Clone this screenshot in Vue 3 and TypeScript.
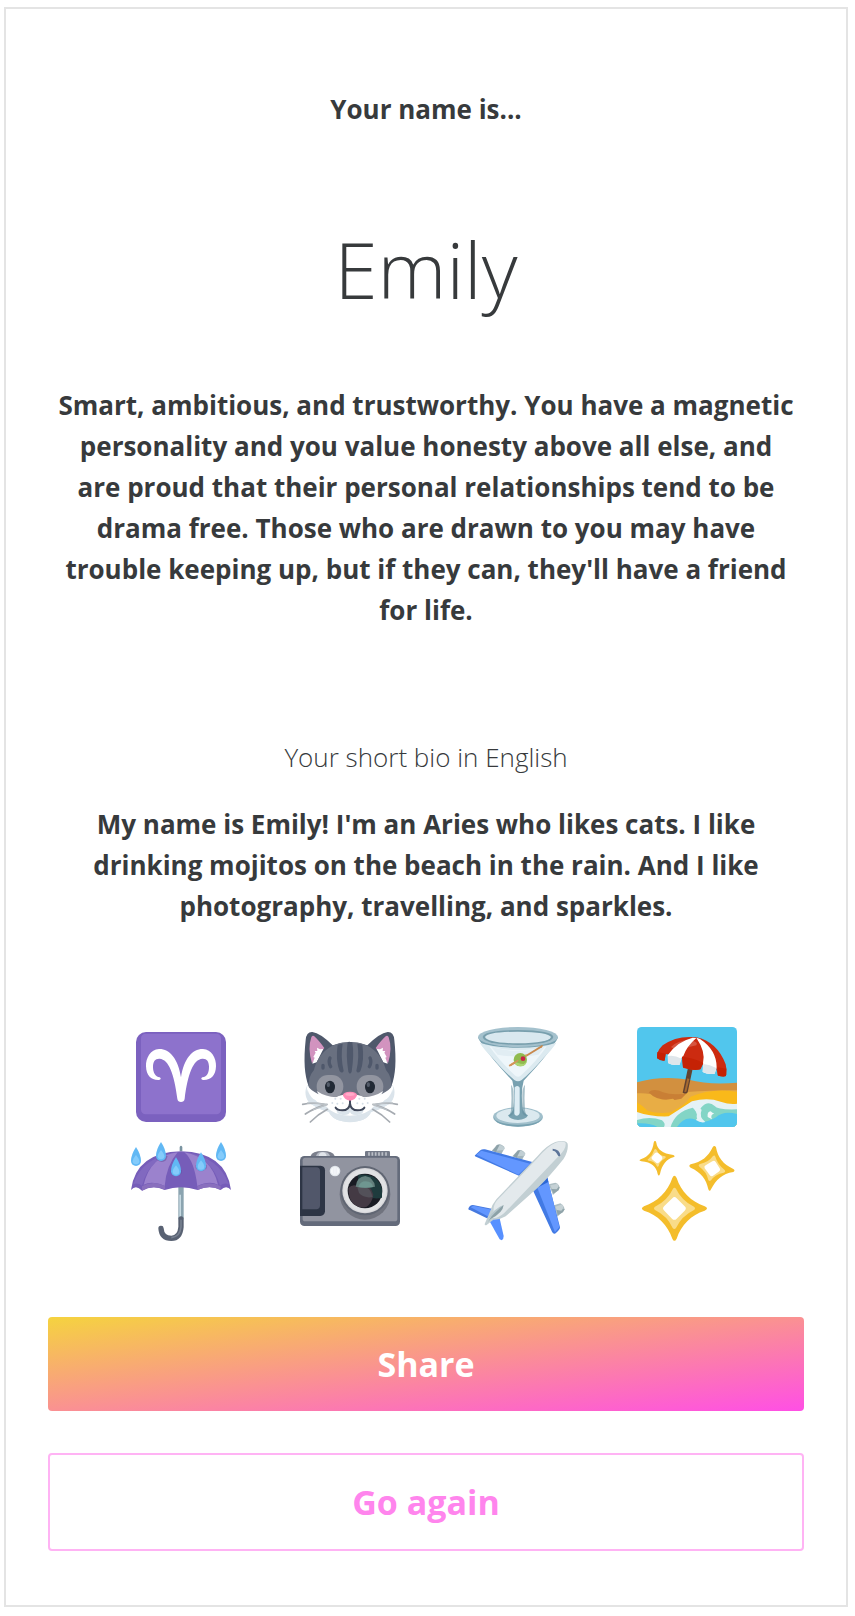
<script setup lang="ts">
import { ref } from 'vue'

const name = ref('Emily')
</script>

<template>
  <main class="card">
    <h2 class="text strong">Your name is...</h2>
    <h1 class="name">{{ name }}</h1>
    <p class="text strong traits">
      Smart, ambitious, and trustworthy. You have a magnetic personality and you value honesty above
      all else, and are proud that their personal relationships tend to be drama free. Those who are
      drawn to you may have trouble keeping up, but if they can, they'll have a friend for life.
    </p>
    <h3 class="text light">Your short bio in English</h3>
    <p class="text strong bio">
      My name is {{ name }}! I'm an Aries who likes cats. I like drinking mojitos on the beach in the
      rain. And I like photography, travelling, and sparkles.
    </p>

    <div class="emojis">
      <svg viewBox="33 36 300 300" role="img" aria-label="Aries">
        <rect x="48" y="51" width="270" height="270" rx="30" fill="#7b61bf" />
        <rect x="63" y="56" width="240" height="242" rx="14" fill="#8d72cc" />
        <path
          d="M183 187C192 130 218 101 249 102C275 103 289 130 288 154C287 182 273 196 249 195C243 194 242 189 247 187C262 184 267 173 267 155C267 139 260 130 247 131C220 133 203 177 194 251C193 264 173 264 172 251C163 177 146 133 119 131C106 130 99 139 99 155C99 173 106 184 119 187C124 189 123 194 117 195C93 196 79 182 78 154C77 130 91 103 117 102C148 101 174 130 183 187Z"
          fill="#fff"
        />
      </svg>

      <svg viewBox="30 36 300 300" role="img" aria-label="Cat">
        <path d="M52 211C42 227 45 254 63 267Q91 285 117 292Q130 320 180 322Q230 320 243 292Q269 285 297 267C315 254 318 227 308 211Z" fill="#dbe4eb" />
        <path d="M56 214Q37 166 47 75Q49 50 67 51Q91 54 128 91Q180 72 232 91Q269 54 293 51Q311 50 313 75Q323 166 304 214Z" fill="#4f586b" />
        <path d="M64 67Q52 101 66 145L103 99Q86 75 72 63Q66 60 64 67Z" fill="#d293bf" />
        <path d="M296 67Q308 101 294 145L257 99Q274 75 288 63Q294 60 296 67Z" fill="#d293bf" />
        <path d="M67 146L74 128L70 126L77 113L74 108L82 108L81 98L90 103L100 102L80 142Z" fill="#fff" />
        <path d="M293 146L286 128L290 126L283 113L286 108L278 108L279 98L270 103L260 102L280 142Z" fill="#fff" />
        <path d="M180 81C121 80 83 119 72 165Q54 185 56 218C74 247 126 259 180 259C234 259 286 247 304 218Q306 185 288 165C277 119 239 80 180 81Z" fill="#697080" />
        <path d="M52 211C47 238 55 249 76 255L103 289Q180 319 257 289L284 255C305 249 313 238 308 211C286 243 241 251 200 239L180 235L160 239C119 251 74 243 52 211Z" fill="#fff" />
        <path d="M53 222Q58 255 108 274Q130 302 180 302Q230 302 252 274Q302 255 307 222Q317 254 296 268Q270 284 243 292Q229 321 180 321Q131 321 117 292Q90 284 64 268Q43 254 53 222Z" fill="#dbe4eb" />
        <path d="M173 82Q175 78 187 82Q193 119 185 170Q180 181 175 170Q167 119 173 82ZM143 89L158 86Q151 125 161 168Q157 177 149 169Q136 135 143 89ZM217 89L202 86Q209 125 199 168Q203 177 211 169Q224 135 217 89Z" fill="#4f586b" />
        <g fill="none" stroke="#4f586b" stroke-linecap="round" stroke-width="10"><path d="M120 129Q114 142 122 155M240 129Q246 142 238 155M99 151V159M261 151V159" /></g>
        <rect x="80" y="180" width="80" height="69" rx="34" fill="#9295a0" /><rect x="200" y="180" width="80" height="69" rx="34" fill="#9295a0" />
        <path d="M80 228Q118 253 160 244Q167 238 180 238Q193 238 200 244Q242 253 280 228Q270 250 240 258L120 258Q90 250 80 228Z" fill="#fff" />
        <ellipse cx="120" cy="216" rx="15" ry="19" fill="#222a35" /><ellipse cx="240" cy="216" rx="15" ry="19" fill="#222a35" />
        <ellipse cx="115" cy="209" rx="5" ry="7" fill="#535b69" /><ellipse cx="235" cy="209" rx="5" ry="7" fill="#535b69" />
        <path d="M138 275Q144 290 157 289Q176 288 180 270Q184 288 203 289Q216 290 222 275Q224 299 201 300Q180 301 180 289Q180 301 159 300Q136 299 138 275Z" fill="#dbe4eb" />
        <path d="M180 255V265Q178 286 157 286Q141 285 137 278M180 265Q182 286 203 286Q219 285 223 278" fill="none" stroke="#40485a" stroke-width="6" stroke-linecap="round" />
        <path d="M159 241Q160 230 180 230Q200 230 201 241Q197 255 180 257Q163 255 159 241Z" fill="#ff8bb7" /><ellipse cx="180" cy="238" rx="14" ry="5" fill="#ffabc9" />
        <g fill="#d6dfe7"><circle cx="136" cy="251" r="3" /><circle cx="152" cy="251" r="3" /><circle cx="127" cy="264" r="3" /><circle cx="142" cy="266" r="3" /><circle cx="158" cy="265" r="3" /><circle cx="208" cy="251" r="3" /><circle cx="224" cy="251" r="3" /><circle cx="202" cy="265" r="3" /><circle cx="218" cy="266" r="3" /><circle cx="233" cy="264" r="3" /></g>
        <path d="M38 268Q70 261 109 269M46 297Q72 279 111 268M61 321Q84 298 112 283M322 268Q290 261 251 269M314 297Q288 279 249 268M299 321Q276 298 248 283" fill="none" stroke="#a6abb1" stroke-width="5" stroke-linecap="round" />
        <path d="M53 264Q75 262 109 269M71 284L111 269M307 264Q285 262 251 269M289 284L249 269" fill="none" stroke="#bcc2c7" stroke-width="4" stroke-linecap="round" />
      </svg>

      <svg viewBox="24 36 300 300" role="img" aria-label="Cocktail glass">
        <ellipse cx="174" cy="306" rx="75" ry="29" fill="#a0bfcb" /><ellipse cx="174" cy="302" rx="65" ry="22" fill="#dbe9ef" />
        <path d="M101 306Q105 333 174 335Q243 333 247 306Q241 328 174 329Q107 327 101 306Z" fill="#77a1b0" />
        <path d="M54 66Q56 76 70 91Q84 120 157 197Q166 228 160 282Q156 295 144 301Q150 314 174 315Q198 314 204 301Q192 295 188 282Q182 228 191 197Q264 120 278 91Q292 76 294 66Z" fill="#78a1b0" />
        <path d="M59 83Q72 104 97 128Q133 170 163 195Q174 203 185 195Q215 170 251 128Q276 104 289 83Q246 98 174 98Q102 98 59 83Z" fill="#dceaf0" />
        <path d="M88 94Q174 118 260 94Q232 137 182 182Q174 188 166 182Q119 139 88 94Z" fill="#eef6fa" />
        <path d="M94 96Q174 119 254 96L235 119Q174 130 113 119Z" fill="#e1edf3" />
        <path d="M153 287Q156 250 153 209Q161 218 161 240V295Q154 305 147 302Q151 296 153 287ZM195 287Q192 250 195 209Q187 218 187 240V295Q194 305 201 302Q197 296 195 287Z" fill="#628e9e" opacity=".55" />
        <path d="M164 217Q174 208 179 218V292Q179 301 171 302Q163 302 163 294Z" fill="#deedf4" />
        <ellipse cx="174" cy="66" rx="120" ry="30" fill="#a4c1cd" /><path d="M68 66Q70 46 174 45Q278 46 280 66Q276 88 174 90Q72 88 68 66Z" fill="#789fad" /><path d="M75 66Q82 51 174 50Q266 51 273 66Q266 84 174 85Q82 84 75 66Z" fill="#d9e8ef" />
        <path d="M149 150L246 90Q251 91 246 97L152 154Z" fill="#c8894e" /><path d="M149 151L200 119" stroke="#e5a161" stroke-width="4" />
        <circle cx="181" cy="134" r="20" fill="#90bb4f" /><path d="M162 139Q172 146 191 147Q198 143 201 138A20 20 0 0 1 162 139Z" fill="#acd574" /><path d="M149 152L173 137" stroke="#d4935b" stroke-width="5" stroke-linecap="round" /><circle cx="189" cy="131" r="7" fill="#c92546" />
      </svg>

      <svg viewBox="30 36 300 300" role="img" aria-label="Beach with umbrella">
        <defs><clipPath id="beach-edge"><rect x="30" y="36" width="300" height="300" rx="14" /></clipPath></defs>
        <g clip-path="url(#beach-edge)">
          <path d="M30 36H330V336H30Z" fill="#51c6ed" />
          <path d="M30 202Q103 181 185 194Q245 210 330 203V336H30Z" fill="#d2903f" />
          <path d="M30 235Q66 233 92 243Q130 251 180 231Q248 226 330 226V336H30Z" fill="#e8ad45" />
          <path d="M65 232Q79 218 108 232Q139 242 180 234L163 251Q95 266 65 232Z" fill="#c97f35" />
          <path d="M30 262Q84 303 130 287Q170 277 191 245Q258 218 330 231V336H30Z" fill="#f9b91a" />
          <path d="M30 245Q84 262 138 251L164 272L132 292Q90 297 62 287L30 258Z" fill="#e8ad45" />
          <path d="M30 291Q73 306 125 304Q158 283 195 259Q242 246 281 260Q309 270 330 266V336H30Z" fill="#e5f2f6" />
          <path d="M30 315Q70 302 105 316Q117 326 111 336H30Z" fill="#83d5c6" />
          <path d="M131 336Q143 291 197 278Q213 285 209 307Q214 320 230 323Q205 303 222 278Q243 255 263 273Q271 285 330 283V336Z" fill="#83d5c6" />
          <path d="M30 325Q70 323 91 336H30ZM150 336Q172 301 206 314Q227 330 267 307Q289 286 330 297V336Z" fill="#51c6ed" />
          <path d="M199 279Q220 305 207 315Q222 325 235 321Q215 306 224 284Q209 271 199 279Z" fill="#e5f2f6" />
          <path d="M242 306Q240 290 251 289Q257 296 263 295Q248 300 255 313Z" fill="#f2f8fa" />
          <path d="M183 158L197 161L182 232Q178 239 167 233Z" fill="#63422f" /><path d="M181 190L187 192L178 230L172 231Z" fill="#a76a30" />
          <path d="M91 130Q86 112 107 91Q150 60 208 67Q270 80 296 148Q300 162 298 180Q291 187 273 182L267 157Q248 147 229 145L220 163Q205 169 168 158L165 125Q139 120 116 117L113 136Q102 138 91 130Z" fill="#cc2b10" />
          <path d="M197 68Q149 80 122 121L123 144Q136 153 158 149Q161 127 169 123Q179 94 208 69Z" fill="#fff" />
          <path d="M208 68Q237 111 228 144L227 171Q242 180 263 176L269 157Q269 105 219 72Z" fill="#fff" />
          <path d="M165 125Q197 127 229 144L220 163Q195 167 168 157Z" fill="#c52205" />
          <path d="M123 123Q141 119 164 131L158 149Q138 153 123 144ZM229 147Q248 149 268 159L263 176Q244 180 227 171Z" fill="#dfe6eb" />
          <path d="M91 111L116 116L113 137Q100 139 90 130ZM272 157L298 161L297 183Q289 188 272 181Z" fill="#c52205" />
          <path d="M132 96Q151 76 188 75Q216 80 208 91Q191 94 167 103Q139 102 132 96Z" fill="#fff" opacity=".2" />
        </g>
      </svg>

      <svg viewBox="33 33 300 300" role="img" aria-label="Umbrella with rain drops">
        <path d="M179 64V51Q183 44 187 51V64Z" fill="#7993a0" /><path d="M175 168H191V268H175Z" fill="#8ba4b0" /><path d="M178 194H183V265H178Z" fill="#c6d9e1" /><path d="M183 267V291Q180 325 154 325Q125 325 123 295" fill="none" stroke="#596273" stroke-width="16" stroke-linecap="round" /><path d="M183 269V291Q180 320 154 323" fill="none" stroke="#778090" stroke-width="5" />
        <path d="M33 180Q48 67 183 64Q318 67 333 180Q319 164 302 180Q270 162 233 180Q182 163 134 180Q98 162 66 182Q48 162 33 180Z" fill="#765db9" />
        <path d="M40 163Q65 82 173 66Q87 84 66 167Q53 157 40 163ZM193 66Q299 82 326 163Q313 157 300 167Q278 84 193 66Z" fill="#8169c0" />
        <path d="M71 164Q92 78 173 67Q139 106 134 168Q97 151 71 164ZM193 67Q223 92 232 168Q269 151 294 164Q274 81 193 67Z" fill="#9b82cd" />
        <path d="M66 169Q100 149 135 169V179Q98 163 66 182ZM232 169Q268 151 302 169V180Q270 163 232 180Z" fill="#896fbd" />
        <path d="M108 88Q125 102 138 91L143 79Q132 73 118 80ZM152 129Q167 147 185 130V120H152ZM227 115Q243 133 260 115V105H227Z" fill="#594890" opacity=".45" />
        <g id="rain-drop"><path d="M123 36Q108 59 108 78A15 15 0 0 0 138 78Q138 59 123 36Z" fill="#61b8f4" /><path d="M123 60Q113 72 113 79A10 9 0 0 0 133 79Q133 72 123 60Z" fill="#84cbfb" /></g>
        <use href="#rain-drop" x="-75" y="15" /><use href="#rain-drop" x="45" y="46" /><use href="#rain-drop" x="120" y="31" /><use href="#rain-drop" x="180" />
      </svg>

      <svg viewBox="30 33 300 300" role="img" aria-label="Camera">
        <path d="M62 78Q66 63 98 63Q129 63 134 78Z" fill="#7b7f8c" /><path d="M78 78Q81 65 98 65Q117 65 120 78Z" fill="#b6bbc5" /><path d="M86 78Q88 67 98 67Q108 67 110 78Z" fill="#e1e5ea" /><path d="M225 78V66Q225 63 229 63H296Q300 63 300 67V78Z" fill="#747a88" /><path d="M237 67V77M247 67V77M257 67V77M267 67V77M277 67V77M288 67V77" stroke="#bcc0c8" stroke-width="5" />
        <rect x="30" y="78" width="300" height="210" rx="13" fill="#646b7b" /><rect x="38" y="83" width="284" height="191" rx="8" fill="#9194a0" /><path d="M30 107H92Q105 108 105 121V244Q104 257 91 258H30Z" fill="#2d3545" /><path d="M30 112H79Q90 112 90 123V227Q89 237 79 238H37V112Z" fill="#51576a" />
        <circle cx="225" cy="193" r="76" fill="#70737e" /><circle cx="225" cy="182" r="74" fill="#606673" /><circle cx="225" cy="182" r="68" fill="#d8d8db" /><circle cx="225" cy="182" r="64" fill="#e1e2e4" /><circle cx="225" cy="183" r="52" fill="#191b23" />
        <path d="M205 134Q263 127 276 177V203Q236 214 202 171Z" fill="#1e3b3d" /><path d="M175 174Q188 161 204 169Q241 157 250 194Q246 219 230 230Q211 237 190 222Q176 208 175 174Z" fill="#443a44" /><path d="M201 169Q240 162 248 201Q223 206 207 189Z" fill="#535159" /><path d="M197 170Q200 140 226 138Q252 143 255 170Q226 176 197 170Z" fill="#63807d" /><path d="M205 171Q210 154 227 154Q247 155 249 171Q226 175 205 171Z" fill="#6f9690" />
        <circle cx="135" cy="123" r="16" fill="#e2e7ec" /><circle cx="135" cy="123" r="12" fill="#f8fafc" /><path d="M130 112V134M135 110V136M140 112V134" stroke="#e5e9ee" stroke-width="2" />
      </svg>

      <svg viewBox="24 33 300 300" role="img" aria-label="Airplane">
        <g id="plane-engine"><path d="M95 62L112 44Q125 39 134 54L124 73Z" fill="#a4b6bc" /><path d="M111 45Q103 51 109 62L132 60L134 54Q124 42 111 45Z" fill="#c1cfd4" /><path d="M98 62L111 45L119 44L108 66Z" fill="#8da1a8" /></g><use href="#plane-engine" x="62" y="17" /><path d="M266 163L286 158Q298 162 299 174L279 195ZM282 226L301 220Q312 226 314 239L292 260Z" fill="#adbec3" /><path d="M274 177L299 171L296 181L281 191ZM290 240L314 237L309 247L293 256Z" fill="#90a4aa" /><path d="M271 166L292 161Q298 169 290 178L276 177ZM286 230L306 223Q314 232 304 242L291 240Z" fill="#c5d1d5" />
        <path d="M45 76L61 61Q67 56 75 58L220 97L180 139L48 80Q43 79 45 76Z" fill="#427ae4" /><path d="M49 74L64 62L210 101L175 134Z" fill="#6397ff" /><path d="M218 179L260 137L300 292Q301 299 285 311Q279 312 276 305Z" fill="#427ae4" /><path d="M230 168L262 142L298 291L285 307Z" fill="#6397ff" /><path d="M220 179L261 139L265 156Z" fill="#2d68d5" />
        <path d="M25 236Q28 226 39 225L103 238L84 266L31 241Q24 240 25 236Z" fill="#4679df" /><path d="M32 232L40 227L99 240L83 259Z" fill="#6296ff" /><path d="M87 271L118 261L131 318Q131 328 125 331L119 328Z" fill="#5790ff" />
        <path d="M74 282L92 240Q96 224 109 208L233 78Q258 47 286 36Q317 28 323 41Q326 63 310 88Q269 139 238 169L137 259Q119 270 100 269L80 285Q74 287 74 282Z" fill="#c2cfd3" /><path d="M101 242Q99 225 112 210L233 84Q261 49 287 38Q310 31 317 39Q319 57 297 77L132 250Q113 266 99 264Q94 253 101 242Z" fill="#e3e9ec" /><path d="M84 276Q104 238 131 225Q129 248 92 267Z" fill="#8ca1a7" /><path d="M82 270Q101 236 130 225L91 262Z" fill="#b5c6cc" /><path d="M278 56Q300 58 301 77Q296 81 293 75Q287 62 278 62Z" fill="#5d759a" />
      </svg>

      <svg viewBox="30 33 300 300" role="img" aria-label="Sparkles">
        <path d="M136 144Q142 131 149 144C162 185 193 215 233 229Q247 235 233 242C193 254 162 285 149 326Q142 339 136 326C122 285 92 254 51 242Q38 236 51 229C92 215 122 185 136 144Z" fill="#f4bd2b" /><path d="M138 176Q142 170 147 176Q164 212 201 230Q207 235 201 240Q164 258 147 294Q142 300 137 294Q121 258 84 240Q78 235 84 230Q121 212 138 176Z" fill="#f9dc89" /><path d="M136 205Q142 197 149 205L173 229Q180 235 173 242L149 266Q142 273 135 266L112 242Q104 235 112 228Z" fill="#fff" />
        <path d="M257 52Q262 44 267 52C272 82 288 103 319 117Q326 121 319 126C286 131 267 149 252 178Q248 187 244 178C238 147 222 127 191 113Q183 108 191 103C224 97 244 79 257 52Z" fill="#f4bd2b" /><path d="M258 78Q263 74 265 80Q271 102 293 120Q297 126 290 128Q264 133 252 151Q247 156 244 150Q239 125 217 110Q212 105 219 102Q245 97 258 78Z" fill="#f9dc89" /><path d="M256 94Q262 90 266 96L278 115Q282 121 275 125L257 138Q252 141 248 135L233 115Q230 109 236 106Z" fill="#fff" />
        <path d="M80 38Q84 27 88 38C91 58 106 70 139 75Q147 79 139 82C119 87 105 104 99 132Q95 141 92 132C88 110 74 97 43 94Q32 91 43 87C64 80 77 63 80 38Z" fill="#f4bd2b" /><path d="M82 59Q85 54 89 60Q96 77 115 79Q118 83 114 85Q98 95 95 108Q91 113 89 107Q83 94 65 92Q59 89 65 86Q77 76 82 59Z" fill="#f9dc89" /><path d="M84 69Q90 65 94 70L104 79Q109 84 104 89L95 98Q91 102 86 97L75 88Q71 84 76 79Z" fill="#fff" />
      </svg>
    </div>

    <button class="button share" type="button">Share</button>
    <button class="button again" type="button">Go again</button>
  </main>
</template>

<style>
body {
  margin: 0;
  background: #fff;
}
</style>

<style scoped>
.card {
  display: flex;
  flex-direction: column;
  margin: 7px 7px 9px 4px;
  padding: 80px 42px 54px;
  border: 2px solid #e4e4e4;
  font-family: 'Open Sans', sans-serif;
  text-align: center;
  color: #373a3c;
}
.text {
  margin: 0;
  font-size: 26px;
  line-height: 41px;
}
.strong {
  font-weight: 700;
}
.light {
  margin-top: 106px;
  font-weight: 300;
}
.name {
  margin: 85px 0 62px;
  font-size: 78px;
  line-height: 108px;
  font-weight: 300;
}
.traits {
  padding: 0 8px;
}
.bio {
  margin-top: 26px;
  padding: 0 26px;
}
.emojis {
  display: grid;
  grid-template-columns: repeat(4, 1fr);
  justify-items: center;
  row-gap: 14px;
  margin: 100px 33px 76px 49px;
}
.emojis svg {
  display: block;
  width: 100px;
  height: 100px;
}
.button {
  width: 100%;
  padding: 23px;
  border: 0;
  border-radius: 4px;
  font-family: inherit;
  font-size: 34px;
  line-height: 48px;
  font-weight: 700;
  cursor: pointer;
}
.share {
  color: #fff;
  background: linear-gradient(to bottom right, #f5d33f, #ff4fe5);
}
.again {
  margin-top: 42px;
  border: 2px solid #ffb3f4;
  color: #ff85ed;
  background: transparent;
}
</style>
